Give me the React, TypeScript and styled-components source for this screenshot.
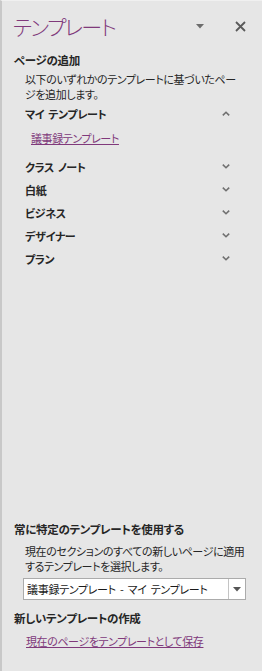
import React from 'react'
import styled, { createGlobalStyle } from 'styled-components'

const GlobalStyle = createGlobalStyle`
  html, body {
    margin: 0;
    padding: 0;
    background: #e6e6e6;
  }
  body {
    font-family: "Noto Sans CJK JP", "Noto Sans", sans-serif;
    font-feature-settings: "palt";
    color: #262626;
  }
`

const Pane = styled.div`
  width: 262px;
  height: 671px;
  box-sizing: border-box;
  background: #e6e6e6;
  border-left: 2px solid #c8c8c8;
  border-top: 1px solid #f0f0f0;
  display: flex;
  flex-direction: column;
  padding: 0 0 0 11px;
`

const Header = styled.div`
  display: flex;
  align-items: center;
  height: 46px;
  padding-top: 2px;
`

const Title = styled.h1`
  flex: 1;
  margin: 0;
  font-size: 21px;
  font-weight: 300;
  color: #80397b;
  letter-spacing: -1.6px;
`

const IconButton = styled.button<{ $gap: number }>`
  border: none;
  background: transparent;
  padding: 0;
  width: 20px;
  height: 20px;
  display: flex;
  align-items: center;
  justify-content: center;
  margin-right: ${({ $gap }) => $gap}px;
`

const SectionTitle = styled.div<{ $top: number }>`
  font-size: 11.5px;
  font-weight: 700;
  line-height: 16px;
  letter-spacing: -0.3px;
  margin: ${({ $top }) => $top}px 0 0 1px;
`

const Desc = styled.p<{ $top: number }>`
  margin: ${({ $top }) => $top}px 0 0 12px;
  font-size: 11px;
  line-height: 15px;
  letter-spacing: -0.4px;
`

const GroupRow = styled.div`
  display: flex;
  align-items: center;
  height: 23px;
  padding-left: 12px;
  padding-right: 32px;
  font-size: 11px;
  font-weight: 700;
  letter-spacing: -0.3px;
  word-spacing: 1.5px;
`

const GroupLabel = styled.span`
  flex: 1;
`

const TemplateLink = styled.a`
  display: block;
  margin: 5px 0 9px 18px;
  font-size: 11px;
  line-height: 16px;
  letter-spacing: -0.4px;
  color: #80397b;
  text-decoration: underline;
`

const SaveLink = styled(TemplateLink)`
  margin: 7px 0 0 13px;
`

const Spacer = styled.div`
  flex: 1;
`

const Select = styled.div`
  display: flex;
  align-items: stretch;
  margin: 4px 0 0 10px;
  width: 223px;
  height: 22px;
  box-sizing: border-box;
  background: #fff;
  border: 1px solid #ababab;
`

const SelectText = styled.span`
  flex: 1;
  font-size: 11px;
  line-height: 20px;
  letter-spacing: -0.3px;
  word-spacing: 2px;
  padding-left: 3px;
  color: #1a1a1a;
`

const SelectArrow = styled.span`
  width: 16px;
  border-left: 1px solid #c4c4c4;
  display: flex;
  align-items: center;
  justify-content: center;
`

const BottomGap = styled.div`
  height: 22px;
`

const Triangle = ({ color = '#6d6d6d' }: { color?: string }) => (
  <svg width="8" height="5" viewBox="0 0 8 5">
    <path d="M0 0h8L4 4.5z" fill={color} />
  </svg>
)

const Chevron = ({ up }: { up?: boolean }) => (
  <svg width="8" height="5" viewBox="0 0 8 5">
    <path
      d={up ? 'M0.8 4.4L4 1.3l3.2 3.1' : 'M0.8 0.6L4 3.7l3.2-3.1'}
      fill="none"
      stroke="#707070"
      strokeWidth="1.6"
    />
  </svg>
)

const Close = () => (
  <svg width="11" height="11" viewBox="0 0 11 11">
    <path d="M1 1l9 9M10 1l-9 9" stroke="#5a5a5a" strokeWidth="1.8" />
  </svg>
)

const groups = ['クラス ノート', '白紙', 'ビジネス', 'デザイナー', 'プラン']

export default function App() {
  return (
    <>
      <GlobalStyle />
      <Pane>
        <Header>
          <Title>テンプレート</Title>
          <IconButton $gap={20}>
            <Triangle />
          </IconButton>
          <IconButton $gap={12}>
            <Close />
          </IconButton>
        </Header>
        <SectionTitle $top={3}>ページの追加</SectionTitle>
        <Desc $top={4}>
          以下のいずれかのテンプレートに基づいたペー
          <br />
          ジを追加します。
        </Desc>
        <GroupRow>
          <GroupLabel>マイ テンプレート</GroupLabel>
          <Chevron up />
        </GroupRow>
        <TemplateLink>議事録テンプレート</TemplateLink>
        {groups.map((g) => (
          <GroupRow key={g}>
            <GroupLabel>{g}</GroupLabel>
            <Chevron />
          </GroupRow>
        ))}
        <Spacer />
        <SectionTitle $top={0}>常に特定のテンプレートを使用する</SectionTitle>
        <Desc $top={7}>
          現在のセクションのすべての新しいページに適用
          <br />
          するテンプレートを選択します。
        </Desc>
        <Select>
          <SelectText>議事録テンプレート - マイ テンプレート</SelectText>
          <SelectArrow>
            <Triangle color="#555" />
          </SelectArrow>
        </Select>
        <SectionTitle $top={10}>新しいテンプレートの作成</SectionTitle>
        <SaveLink>現在のページをテンプレートとして保存</SaveLink>
        <BottomGap />
      </Pane>
    </>
  )
}
